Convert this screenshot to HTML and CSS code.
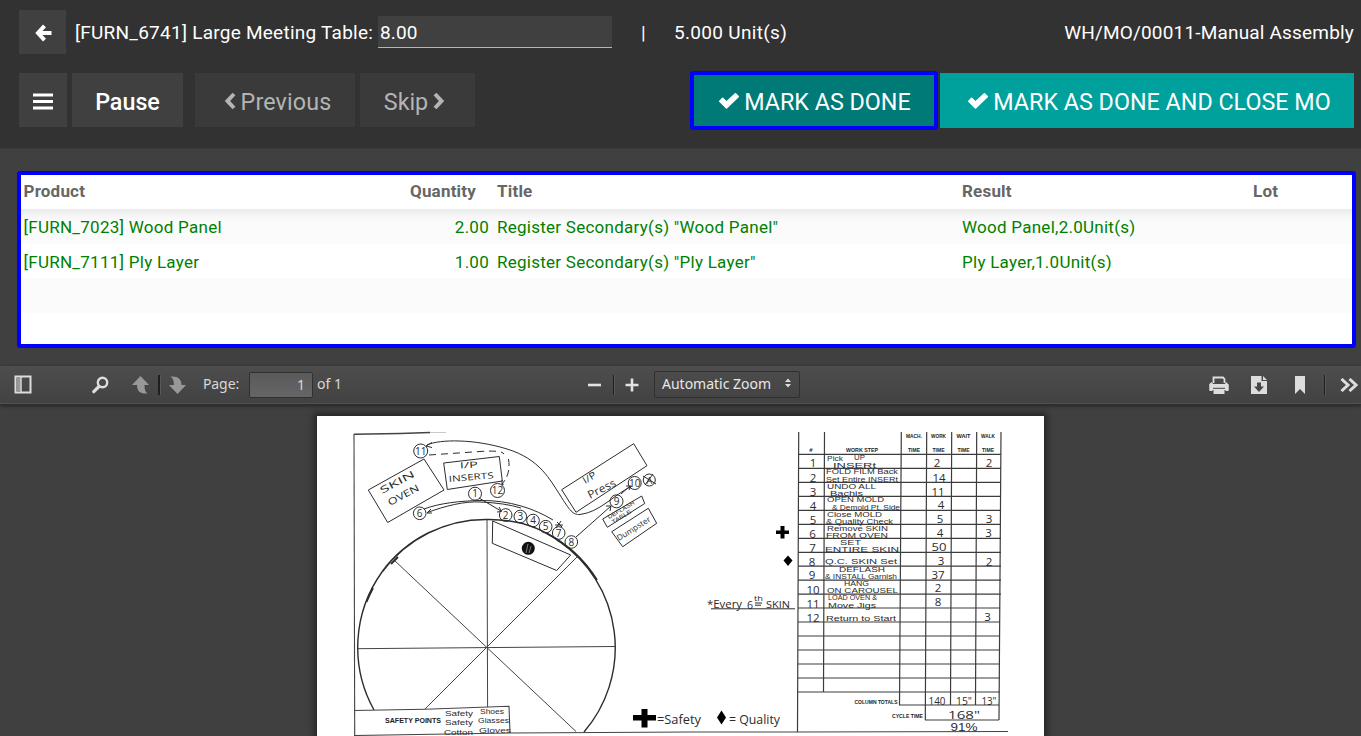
FILE: index.html
```html
<!DOCTYPE html>
<html lang="en">
<head>
<meta charset="utf-8">
<title>Manual Assembly</title>
<link rel="stylesheet" href="styles.css">
</head>
<body>
<svg class="defs" width="0" height="0" aria-hidden="true">
  <symbol id="check" viewBox="0 0 20 16"><path d="M0.8 8.2 L3.6 5.4 L7.5 9.1 L16.400 0.8 L19.2 3.600 L7.5 15 Z" stroke-linejoin="round" stroke-width="1.600" stroke="#fff" fill="#fff"/></symbol>
</svg>
<header class="head">
  <div class="info">
    <button class="btn back"><svg width="17" height="18" viewBox="0 0 17 18"><path d="M9.500 1.800 L3 9 L9.500 16.200 M4 9 H16.500" fill="none" stroke="#fff" stroke-width="4"/></svg></button>
    <span class="product">[FURN_6741] Large Meeting Table:</span>
    <span class="qty">8.00</span>
    <span class="bar">|</span>
    <span class="units">5.000 Unit(s)</span>
    <span class="order">WH/MO/00011-Manual Assembly</span>
  </div>
  <div class="actions">
    <button class="btn menu"><svg width="20" height="17" viewBox="0 0 20 17"><path d="M0 2H20M0 8.5H20M0 15H20" stroke="#fff" stroke-width="3.2"/></svg></button>
    <button class="btn pause">Pause</button>
    <button class="btn dim previous"><svg width="12" height="18" viewBox="0 0 12 18"><path d="M10 2 L3.5 9 L10 16" fill="none" stroke="#b4b4b4" stroke-width="4"/></svg><span>Previous</span></button>
    <button class="btn dim skip"><span>Skip</span><svg width="12" height="18" viewBox="0 0 12 18"><path d="M2 2 L8.5 9 L2 16" fill="none" stroke="#b4b4b4" stroke-width="4"/></svg></button>
    <button class="btn done"><svg width="20" height="16"><use href="#check"/></svg><span>MARK AS DONE</span></button>
    <button class="btn close"><svg width="20" height="16"><use href="#check"/></svg><span>MARK AS DONE AND CLOSE MO</span></button>
  </div>
</header>
<main>
  <section class="lines">
    <div class="row th"><span>Product</span><span class="num">Quantity</span><span>Title</span><span>Result</span><span>Lot</span></div>
    <div class="row shade first"><span>[FURN_7023] Wood Panel</span><span class="num">2.00</span><span>Register Secondary(s) "Wood Panel"</span><span>Wood Panel,2.0Unit(s)</span><span></span></div>
    <div class="row"><span>[FURN_7111] Ply Layer</span><span class="num">1.00</span><span>Register Secondary(s) "Ply Layer"</span><span>Ply Layer,1.0Unit(s)</span><span></span></div>
    <div class="row shade"></div>
  </section>
  <section class="viewer">
    <div class="toolbar">
      <div class="group left">
        <svg class="i-side" width="18" height="19" viewBox="0 0 18 19"><path d="M1.5 1.5H16.500V17.500H1.5Z" fill="none" stroke="#ddd" stroke-width="2"/><path d="M3 3h3.500v13H3z" fill="#999"/><path d="M7 2v15" stroke="#ddd" stroke-width="1.500"/></svg>
        <svg class="i-find" width="17" height="18" viewBox="0 0 17 18"><circle cx="10.500" cy="6.500" r="4.700" fill="none" stroke="#ddd" stroke-width="2.400"/><path d="M7 10.500L1.800 15.700" stroke="#ddd" stroke-width="3.200" stroke-linecap="round"/></svg>
        <svg class="i-up" width="17" height="18" viewBox="0 0 17 18"><path d="M8.500 0L17 9H12.500C12.500 13 13 15.500 15.500 17.500C9 18 5 16 5 9H0Z" fill="#989898"/></svg>
        <i class="split thick"></i>
        <svg class="i-down" width="17" height="18" viewBox="0 0 17 18"><path d="M8.500 18L17 9H12.500C12.500 3 9 0 1.500 0.500C4 2.500 5 5 5 9H0Z" fill="#989898"/></svg>
        <span class="page-label">Page:</span>
        <span class="page-box">1</span>
        <span class="page-of">of 1</span>
      </div>
      <div class="group zoom">
        <svg width="13" height="14" viewBox="0 0 13 14"><path d="M0 7H13" stroke="#e2e2e2" stroke-width="2.600"/></svg>
        <i class="split"></i>
        <svg width="14" height="14" viewBox="0 0 14 14"><path d="M0.500 7H13.500M7 0.500V13.500" stroke="#e2e2e2" stroke-width="2.600"/></svg>
        <span class="select"><span>Automatic Zoom</span><svg width="6" height="10" viewBox="0 0 6 10"><path d="M0 4L3 0.500L6 4ZM0 6L3 9.500L6 6Z" fill="#ddd"/></svg></span>
      </div>
      <div class="group right">
        <svg class="i-print" width="20" height="18" viewBox="0 0 20 18"><path d="M4.500 7V1.500H14L15.500 3V7" fill="none" stroke="#ddd" stroke-width="1.800"/><path d="M2.500 6L5 9H15L17.500 6L19.500 9V15H16.500V12.500H3.500V15H0.500V8Z" fill="#ddd"/><path d="M0.500 8H19.500V14H0.500Z" fill="#ddd"/><path d="M4 12.300H16" stroke="#444"/><path d="M4.500 13.300H15.500V18H4.500Z" fill="#ddd"/></svg>
        <svg class="i-save" width="16" height="18" viewBox="0 0 16 18"><path d="M0 0H10.500V5H16V18H0Z M6 6.500V10.500H3L8 16L13 10.500H10V6.500Z" fill="#ddd" fill-rule="evenodd"/><path d="M12 0L16 4H12Z" fill="#ddd"/></svg>
        <svg class="i-mark" width="10" height="18" viewBox="0 0 10 18"><path d="M0 0H10V18L5 13L0 18Z" fill="#ddd"/></svg>
        <i class="split"></i>
        <svg class="i-more" width="18" height="14" viewBox="0 0 18 14"><path d="M1.500 1L8 7L1.500 13M9.500 1L16 7L9.500 13" fill="none" stroke="#ddd" stroke-width="3"/></svg>
      </div>
    </div>
    <div class="canvas">
      <svg class="sheet" width="727" height="320" viewBox="317 416 727 320">
        <rect x="317" y="416" width="727" height="320" fill="#fff"/>
        <!-- frame -->
        <g fill="none" stroke="#444" stroke-width="1.100">
          <path d="M354 434L354.700 736"/><path d="M354 434.300L400 433.500L430 432.500" stroke-width="1.400"/><path d="M430 432.500H446" stroke="#bbb" stroke-width="0.800"/>
          <path d="M354 710.500L425 709.300L509 706.300L510 733M354 735.500L510 733L690 732L797 732L1008 731.500"/>
          <path d="M487 520L487.600 707M357 648.700L615 646.500M394 560L576 731.500M577 557L425 709" stroke-width="1"/>
        </g>
        <path d="M374 710A129 129 0 0 1 382 572M560 542A129 129 0 0 1 584 732" class="ink" stroke-width="1.400"/>
        <path d="M382 572A129 129 0 0 1 487 519.500Q530 519 560 542" class="ink" stroke-width="1.700"/>
        <path d="M366.500 602A129 129 0 0 1 373 588M546 533A129 129 0 0 1 597 580M391 564L398 557" class="ink" stroke-width="1.900"/>
        <!-- stations -->
        <g class="ink" stroke-width="1">
          <path d="M424 459L368.300 490L387.700 522.500L444 490Z"/>
          <path d="M443.700 463L499.300 456.500L502.300 481L447.300 489.500Z"/>
          <path d="M633.700 443.700L647 465.700L576 512.300L561.700 489.700Z"/>
          <path d="M602.700 519L641.700 496L644.700 503.500L607.300 527.300Z"/>
          <path d="M611.700 531.700L648.300 508.300L656.700 523.300L622.700 546.700Z"/>
          <path d="M492.700 521L492.300 543.300L556.700 570.500L570.700 555Z"/>
          <path d="M426.700 445C440 439 475 439 507 449C540 459 550 480 560 495C570 511 573 515 580 514.500C600 512 612 496 632 486M432 442.500L426 446L432 447.500"/>
          <path d="M429 455L480 451.500Q502 450 504 454" stroke-dasharray="7 5"/>
          <path d="M508.500 459Q511 474 502 484M502 480V485L506 483" stroke-dasharray="7 4"/>
          <path d="M424 509C440 503 460 501 480 500.500C510 500 535 509 553 520M427.300 512.500C445 506 465 501 480 502Q505 503 521 508M431 509L427 513L432 513"/>
          <path d="M479 498L501 511M497 512L501.500 511.500L499 507M576 537L611 506M606 506L611 506L610 511M621 494L630 486M626 486L631 486L629 490M557 522L562 527M561 521L556 528M555 525L563 525M645 485L653 474M643 476L656 484"/>
          <circle cx="420.700" cy="451" r="7"/><circle cx="475" cy="493.700" r="6.500"/><circle cx="497.500" cy="490.500" r="7"/><circle cx="419.700" cy="513.300" r="6.300"/>
          <circle cx="505.700" cy="515" r="6.300"/><circle cx="520.300" cy="516.500" r="6.300"/><circle cx="533" cy="520.500" r="6.300"/><circle cx="545.700" cy="526.700" r="6.300"/><circle cx="558.700" cy="533" r="6.300"/><circle cx="571.300" cy="542" r="6.300"/>
          <circle cx="616.500" cy="501.300" r="6.500"/><circle cx="634.700" cy="483" r="6.500"/><circle cx="649.300" cy="480" r="6"/>
        </g>
        <circle cx="528.300" cy="548.300" r="6.500" fill="#111"/><path d="M526 553L528 544M529 553L531 546" stroke="#999" stroke-width="0.800"/>
        <g class="hand mid" font-size="10">
          <text x="420.700" y="454.500">11</text><text x="475" y="497">1</text><text x="497.500" y="494">12</text><text x="419.700" y="517">6</text>
          <text x="505.700" y="518.500">2</text><text x="520.300" y="520">3</text><text x="533" y="524">4</text><text x="545.700" y="530">5</text><text x="558.700" y="536.500">7</text><text x="571.300" y="545.500">8</text>
          <text x="616.500" y="505">9</text><text x="634.700" y="486.500">10</text><text x="649.300" y="484" font-size="9">A</text>
        </g>
        <g class="hand">
          <text transform="translate(382 494) rotate(-28)" font-size="9.500" textLength="38" lengthAdjust="spacingAndGlyphs">SKIN</text>
          <text transform="translate(390 506) rotate(-28)" font-size="9.500" textLength="34" lengthAdjust="spacingAndGlyphs">OVEN</text>
          <text x="460" y="468.500" font-size="8.500" textLength="18" lengthAdjust="spacingAndGlyphs" transform="rotate(-3 460 468.500)">I/P</text>
          <text x="449" y="482" font-size="8.500" textLength="45" lengthAdjust="spacingAndGlyphs" transform="rotate(-5 449 482)">INSERTS</text>
          <text transform="translate(585 484) rotate(-31)" font-size="9.500" textLength="14" lengthAdjust="spacingAndGlyphs">I/P</text>
          <text transform="translate(590 499) rotate(-27)" font-size="11" textLength="30" lengthAdjust="spacingAndGlyphs">Press</text>
          <g class="tight" font-size="5.500">
            <text transform="translate(609 519) rotate(-30)" textLength="30" lengthAdjust="spacingAndGlyphs">DEFLASH</text>
            <text transform="translate(613 524) rotate(-31)" textLength="22" lengthAdjust="spacingAndGlyphs">TABLE</text>
          </g>
          <text transform="translate(619 541) rotate(-32)" font-size="8" textLength="38" lengthAdjust="spacingAndGlyphs">Dumpster</text>
          <g class="tight" font-size="7.200">
            <text x="445" y="716" textLength="28" lengthAdjust="spacingAndGlyphs">Safety</text><text x="480" y="714" textLength="24" lengthAdjust="spacingAndGlyphs">Shoes</text>
            <text x="445" y="725" textLength="28" lengthAdjust="spacingAndGlyphs">Safety</text><text x="478" y="723" textLength="31" lengthAdjust="spacingAndGlyphs">Glasses</text>
            <text x="444" y="735" textLength="29" lengthAdjust="spacingAndGlyphs">Cotton</text><text x="479" y="733" font-size="8" textLength="32" lengthAdjust="spacingAndGlyphs">Gloves</text>
          </g>
          <text x="707" y="608" font-size="10" textLength="35" lengthAdjust="spacingAndGlyphs">*Every</text><text x="747" y="608.500" font-size="10.500">6</text><text x="754" y="600.500" font-size="7" textLength="9" lengthAdjust="spacingAndGlyphs">th</text><text x="766" y="608" font-size="9" textLength="24" lengthAdjust="spacingAndGlyphs">SKIN</text>
          <text x="657" y="724" font-size="13.500" textLength="44" lengthAdjust="spacingAndGlyphs">=Safety</text>
          <text x="729" y="723.500" font-size="13.500" textLength="51" lengthAdjust="spacingAndGlyphs">= Quality</text>
        </g>
        <path d="M711 608.800H795M755 603H762M755 605.200H761" class="ink" stroke-width="1"/>
        <path d="M641.500 709H647.500V715H656V720.500H647.500V727.500H641.500V720.500H633V715H641.500ZM780.500 526H784.500V530.500H789V534H784.500V538.500H780.500V534H776V530.500H780.500Z" fill="#000"/>
        <path d="M721.500 710.500L726 717.500L721.500 724.500L717 717.500ZM788 555.500L792.500 560.500L788 566L783.500 560.500Z" fill="#000"/>
        <text x="385" y="723.300" class="print" font-size="6.800" textLength="56" lengthAdjust="spacingAndGlyphs">SAFETY POINTS</text>
        <!-- work step grid -->
        <g class="ink grid" stroke-width="1.200">
          <path d="M798.700 432L797.500 732M824.500 432L823.500 692M901.300 432L899.500 705M926.700 432L925.300 720M951.700 432L950.500 705M976.700 432L975.500 705M1001 432L999 720"/>
          <path d="M798 454.300H1001M798 468.300H1001M798 482.300H1001M798 496.300H1001M798 510.300H1001M798 524.300H1001M798 538.300H1001M798 552.300H1001M798 566.200H1001M798 580.200H1001M798 594.100H1001M798 608H1000M798 622H1000M798 636H1000M798 650H1000M798 664H1000M798 678H1000M798 692H1000M899 705H999M925 720H999"/>
        </g>
        <g class="print mid" font-size="6">
          <text x="811" y="452">#</text><text x="862" y="452" textLength="32" lengthAdjust="spacingAndGlyphs">WORK STEP</text>
          <text x="914" y="438" textLength="16" lengthAdjust="spacingAndGlyphs">MACH.</text><text x="938.500" y="438" textLength="15" lengthAdjust="spacingAndGlyphs">WORK</text><text x="963.500" y="438" textLength="14" lengthAdjust="spacingAndGlyphs">WAIT</text><text x="988" y="438" textLength="14" lengthAdjust="spacingAndGlyphs">WALK</text>
          <text x="914" y="452" textLength="12" lengthAdjust="spacingAndGlyphs">TIME</text><text x="938.500" y="452" textLength="12" lengthAdjust="spacingAndGlyphs">TIME</text><text x="963.500" y="452" textLength="12" lengthAdjust="spacingAndGlyphs">TIME</text><text x="988" y="452" textLength="12" lengthAdjust="spacingAndGlyphs">TIME</text>
          <text x="876" y="703.500" textLength="43" lengthAdjust="spacingAndGlyphs">COLUMN TOTALS</text><text x="907.500" y="718" textLength="31" lengthAdjust="spacingAndGlyphs">CYCLE TIME</text>
        </g>
        <g class="hand mid" font-size="11.500">
          <text x="813" y="467">1</text><text x="813" y="481.500">2</text><text x="813" y="495.500">3</text><text x="813" y="509.500">4</text><text x="813" y="523.500">5</text><text x="812.500" y="537.500">6</text><text x="812.500" y="551.500">7</text><text x="812" y="565.500">8</text><text x="812" y="579">9</text><text x="813" y="593.500">10</text><text x="813" y="607.500">11</text><text x="813" y="621.500">12</text>
          <text x="937" y="466.500">2</text><text x="939" y="481.500">14</text><text x="938" y="495.500">11</text><text x="941" y="509">4</text><text x="940" y="523">5</text><text x="940" y="537">4</text><text x="939" y="551" textLength="15" lengthAdjust="spacingAndGlyphs">50</text><text x="941" y="565">3</text><text x="938" y="578.500">37</text><text x="938" y="592">2</text><text x="938" y="606">8</text>
          <text x="989" y="467">2</text><text x="989" y="522.500">3</text><text x="988.500" y="537">3</text><text x="989" y="565.500">2</text><text x="987.500" y="621">3</text>
          <text x="937" y="704.500" textLength="17" lengthAdjust="spacingAndGlyphs">140</text><text x="964" y="704.500" textLength="16" lengthAdjust="spacingAndGlyphs">15"</text><text x="989" y="704.500" textLength="15" lengthAdjust="spacingAndGlyphs">13"</text>
          <text x="964" y="719" font-size="11" textLength="32" lengthAdjust="spacingAndGlyphs">168"</text><text x="964" y="731.300" class="tight" font-size="10.500" textLength="27" lengthAdjust="spacingAndGlyphs">91%</text>
        </g>
        <g class="hand tight" font-size="6.800">
          <text x="827" y="460.500" textLength="16" lengthAdjust="spacingAndGlyphs">Pick</text><text x="854" y="460" textLength="11" lengthAdjust="spacingAndGlyphs">UP</text>
          <text x="833" y="467.500" textLength="43" lengthAdjust="spacingAndGlyphs">INSERt</text>
          <text x="826" y="474.300" textLength="72" lengthAdjust="spacingAndGlyphs">FOLD FILM Back</text>
          <text x="826" y="481.500" textLength="72" lengthAdjust="spacingAndGlyphs">Set Entire INSERt</text>
          <text x="827" y="488.500" textLength="49" lengthAdjust="spacingAndGlyphs">UNDO ALL</text>
          <text x="830" y="495.500" textLength="33" lengthAdjust="spacingAndGlyphs">Bachis</text>
          <text x="827" y="502.300" textLength="57" lengthAdjust="spacingAndGlyphs">OPEN MOLD</text>
          <text x="832" y="509.500" textLength="68" lengthAdjust="spacingAndGlyphs">&amp; Demold Pt. Side</text>
          <text x="827" y="516.500" textLength="55" lengthAdjust="spacingAndGlyphs">Close MOLD</text>
          <text x="826" y="523.500" textLength="67" lengthAdjust="spacingAndGlyphs">&amp; Quality Check</text>
          <text x="827" y="530.500" textLength="61" lengthAdjust="spacingAndGlyphs">Remove SKIN</text>
          <text x="826" y="537.700" textLength="62" lengthAdjust="spacingAndGlyphs">FROM OVEN</text>
          <text x="840" y="544.500" textLength="21" lengthAdjust="spacingAndGlyphs">SET</text>
          <text x="825" y="551.700" textLength="74" lengthAdjust="spacingAndGlyphs">ENTIRE SKIN</text>
          <text x="825" y="563.500" textLength="72" lengthAdjust="spacingAndGlyphs">Q.C. SKIN Set</text>
          <text x="839" y="572" textLength="46" lengthAdjust="spacingAndGlyphs">DEFLASH</text>
          <text x="825" y="579.200" textLength="72" lengthAdjust="spacingAndGlyphs">&amp; INSTALL Garnish</text>
          <text x="844" y="586" textLength="25" lengthAdjust="spacingAndGlyphs">HANG</text>
          <text x="827" y="593.400" textLength="71" lengthAdjust="spacingAndGlyphs">ON CAROUSEL</text>
          <text x="828" y="600.300" textLength="49" lengthAdjust="spacingAndGlyphs">LOAD OVEN &amp;</text>
          <text x="828" y="607.500" textLength="48" lengthAdjust="spacingAndGlyphs">Move Jigs</text>
          <text x="826" y="620.500" font-size="7.500" textLength="70" lengthAdjust="spacingAndGlyphs">Return to Start</text>
        </g>
      </svg>
    </div>
  </section>
</main>
</body>
</html>
```
FILE: styles.css
```css
* { box-sizing: border-box; }
body { margin: 0; height: 736px; overflow: hidden; background: #404040; color: #fff; font-family: Roboto, sans-serif; }
.defs { display: block; }
svg { flex: none; }
.head { height: 149px; padding: 10px 7px 0 19px; background: #323232; border-bottom: 1px solid #3a3a3a; }
.info { display: flex; align-items: center; height: 44px; font-size: 19px; white-space: nowrap; }
.btn { display: flex; align-items: center; justify-content: center; border: 0; padding: 2px 0 0; border-radius: 0; background: #404040; color: #fff; font: 500 23.3px Roboto, sans-serif; white-space: nowrap; }
.back { width: 47px; height: 44px; padding-left: 2px; }
.product { width: 303px; margin-left: 9px; letter-spacing: 0.25px; }
.qty { width: 234px; height: 32px; padding-left: 2px; line-height: 33px; background: #404040; border-bottom: 1px solid #b5b5b5; letter-spacing: 0.15px; }
.bar { margin-left: 29px; width: 33px; }
.units { letter-spacing: 0.32px; }
.order { margin-left: auto; letter-spacing: 0.18px; }
.actions { display: flex; align-items: center; height: 58px; margin-top: 17px; }
.menu { width: 48px; height: 54px; padding-top: 3px; }
.pause { width: 111px; height: 54px; margin-left: 5px; padding-top: 4px; }
.btn span { padding-top: 2px; }
.dim { height: 54px; background: #3a3a3a; color: #b4b4b4; font-weight: 400; gap: 5px; }
.previous { width: 160px; margin-left: 12px; padding-left: 5px; letter-spacing: 0.15px; }
.skip { width: 115px; margin-left: 5px; padding-right: 6px; }
.done { width: 248px; height: 59px; margin-left: auto; padding-left: 2px; border: 4px solid #00f; border-radius: 3px; background: #007a77; font-weight: 400; gap: 5px; }
.close { width: 414px; height: 55px; margin-left: 2px; padding-left: 5px; background: #00a09d; font-weight: 400; gap: 5px; }
.lines { height: 177px; margin: 22px 5px 0 17px; border: 4px solid #00f; border-radius: 3px; background: #fff; color: #008000; font-size: 17px; letter-spacing: 0.26px; }
.row { display: grid; grid-template-columns: 360px 108px 465px 291px 1fr; align-items: center; height: 34.7px; padding-top: 1.5px; white-space: nowrap; }
.row span { padding-left: 8px; }
.row span:first-child { padding-left: 2.5px; }
.row .num { text-align: right; }
.th { height: 34px; color: #666; font-weight: 700; padding: 0 0 2px; letter-spacing: 0.2px; }
.th .num { padding-right: 13px; }
.shade { background: #fbfbfb; }
.first { background: linear-gradient(#ececec, #f8f8f8 9px, #fbfbfb 15px); }
.viewer { margin-top: 18px; }
.toolbar { display: flex; height: 39px; padding-bottom: 1px; background: linear-gradient(#4d4d4d, #424242); border-bottom: 1px solid #303030; box-shadow: inset 0 -1px #505050, 0 1px 3px #222; position: relative; font: 14px "Noto Sans", "Open Sans", sans-serif; color: #d9d9d9; }
.group { display: flex; align-items: center; }
.left { width: 588px; padding-left: 14px; }
.i-find { margin-left: 60px; }
.i-up { margin-left: 23px; }
.split { width: 1px; height: 20px; background: #1f1f1f; box-shadow: 1px 0 #585858; }
.thick { width: 2px; margin: 0 9px; }
.page-label { width: 46px; margin-left: 17px; padding-bottom: 2px; letter-spacing: -0.1px; }
.page-box { width: 64px; height: 26px; padding-right: 7px; border: 1px solid #303030; border-radius: 2px; background: linear-gradient(#5a5a5a, #666); text-align: right; line-height: 23px; }
.page-of { margin-left: 4px; padding-bottom: 2px; }
.zoom .split { margin: 0 11px 0 12px; }
.select { display: flex; align-items: center; justify-content: space-between; width: 146px; height: 27px; margin-left: 15px; padding: 0 8px 3px 7px; border: 1px solid #303030; border-radius: 2px; color: #e8e8e8; }
.right { margin-left: auto; padding-right: 3px; }
.i-save { margin-left: 22px; }
.i-mark { margin-left: 28px; }
.right .split { margin: 0 15px 0 19px; }
.canvas { padding: 11px 317px 0; }
.sheet { display: block; box-shadow: 0 0 6px 3px #252525; }
.ink { fill: none; stroke: #2c2c2c; }
.grid { stroke: #3c3c3c; }
.hand { font-family: "Open Sans", sans-serif; fill: #2c2c2c; }
.tight { font-family: "Liberation Sans", Arial, sans-serif; }
.print { font-family: "Liberation Sans", Arial, sans-serif; font-weight: 700; fill: #222; }
.mid { text-anchor: middle; }
```
